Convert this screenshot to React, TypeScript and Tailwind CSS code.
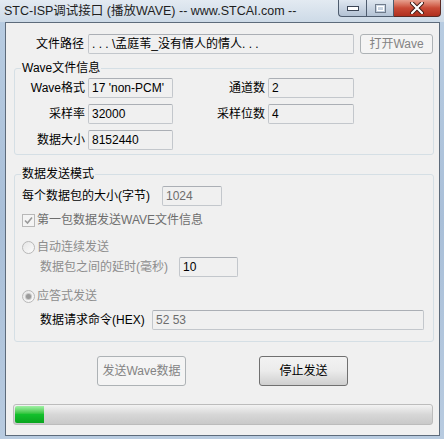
import React from "react";

function Edit({
  value,
  className = "",
  muted = false,
}: {
  value: string;
  className?: string;
  muted?: boolean;
}) {
  return (
    <div
      className={`h-[20px] flex items-center shrink-0 rounded-[2px] border border-[#c3c7cc] border-t-[#abafb5] bg-[#f0f0f0] px-[3px] whitespace-nowrap overflow-hidden ${
        muted ? "text-[#6d6d6d]" : "text-black"
      } ${className}`}
    >
      {value}
    </div>
  );
}

function CheckBox() {
  return (
    <div className="w-[13px] h-[13px] shrink-0 border border-[#b8b8b8] bg-[#f4f4f4] flex items-center justify-center">
      <svg width="9" height="9" viewBox="0 0 9 9">
        <path d="M1 4.5 L3.5 7 L8 1.5" fill="none" stroke="#9a9a9a" strokeWidth="1.6" />
      </svg>
    </div>
  );
}

function Radio({ checked = false }: { checked?: boolean }) {
  return (
    <div className="w-[13px] h-[13px] shrink-0 rounded-full border border-[#b8b8b8] bg-gradient-to-br from-[#e6e6e6] to-[#fbfbfb] flex items-center justify-center">
      {checked && <div className="w-[5px] h-[5px] rounded-full bg-[#9a9a9a] ring-1 ring-[#c8c8c8]" />}
    </div>
  );
}

export default function App() {
  return (
    <div className="w-[444px] h-[439px] flex flex-col overflow-hidden bg-gradient-to-b from-[#b9cde2] via-[#a9bfd8] to-[#b8cbe0] font-['Liberation_Sans','Noto_Sans_CJK_SC',sans-serif] text-[12px] leading-[14px] text-black">
      {/* title bar */}
      <div className="h-[22px] shrink-0 flex items-start bg-gradient-to-b from-[#e3eaf2] via-[#d8e2ec] to-[#cddae7]">
        <div className="pl-[4px] pt-[3px] text-[12.5px] leading-[16px] text-[#1e1e1e] whitespace-nowrap">
          STC-ISP调试接口 (播放WAVE) -- www.STCAI.com --
        </div>
        <div className="ml-auto mr-[3px] flex h-[17px]">
          <div className="w-[28px] flex items-center justify-center rounded-bl-[4px] border border-r-0 border-t-0 border-[#4e5c6e] bg-gradient-to-b from-[#dfe7f0] to-[#b3c2d4]">
            <svg width="12" height="6" viewBox="0 0 12 6">
              <rect x="0.5" y="1.5" width="11" height="4" fill="#fff" stroke="#3c4656" />
            </svg>
          </div>
          <div className="w-[28px] flex items-center justify-center border border-t-0 border-[#4e5c6e] bg-gradient-to-b from-[#dfe7f0] to-[#b3c2d4]">
            <svg width="11" height="9" viewBox="0 0 11 9">
              <rect x="0.5" y="0.5" width="10" height="8" fill="none" stroke="#6f7b8b" />
              <rect x="2.5" y="2.5" width="6" height="4" fill="none" stroke="#fff" />
            </svg>
          </div>
          <div className="w-[47px] flex items-center justify-center rounded-br-[4px] border border-l-0 border-t-0 border-[#5a2a24] bg-gradient-to-b from-[#e7a08f] via-[#c94a36] to-[#b0301f]">
            <svg width="16" height="12" viewBox="0 0 16 12">
              <path d="M3 1 L13 11 M13 1 L3 11" stroke="#3b1a14" strokeWidth="4" strokeLinecap="round" />
              <path d="M3 1 L13 11 M13 1 L3 11" stroke="#fff" strokeWidth="2.2" strokeLinecap="round" />
            </svg>
          </div>
        </div>
      </div>

      {/* window body */}
      <div className="flex-1 flex pl-[5px] pr-[4px] pb-[3px]">
        <div className="flex-1 flex flex-col border border-[#5d6b7b] bg-[#f0f0f0]">
          {/* file path */}
          <div className="mt-[11px] flex items-center pl-[30px]">
            <div className="w-[48px] shrink-0 whitespace-nowrap">文件路径</div>
            <Edit value=". . . \孟庭苇_没有情人的情人. . ." className="ml-[4px] w-[266px]" />
            <div className="ml-[6px] w-[73px] h-[20px] shrink-0 flex items-center justify-center rounded-[3px] border border-[#adb2b5] bg-[#f4f4f4] text-[#838383]">
              打开Wave
            </div>
          </div>

          {/* wave info group */}
          <fieldset className="mt-[7px] ml-[8px] mr-[5px] rounded-[3px] border border-[#d5dfe5] px-0 pt-[3px] pb-[4px]">
            <legend className="ml-[6px] px-[1px] leading-[14px]">Wave文件信息</legend>
            <div className="flex flex-col gap-[6px]">
              <div className="flex items-center">
                <div className="w-[70px] text-right whitespace-nowrap">Wave格式</div>
                <Edit value="17 'non-PCM'" className="ml-[3px] w-[85px]" />
                <div className="w-[92px] text-right whitespace-nowrap">通道数</div>
                <Edit value="2" className="ml-[3px] w-[86px]" />
              </div>
              <div className="flex items-center">
                <div className="w-[70px] text-right whitespace-nowrap">采样率</div>
                <Edit value="32000" className="ml-[3px] w-[85px]" />
                <div className="w-[92px] text-right whitespace-nowrap">采样位数</div>
                <Edit value="4" className="ml-[3px] w-[86px]" />
              </div>
              <div className="flex items-center">
                <div className="w-[70px] text-right whitespace-nowrap">数据大小</div>
                <Edit value="8152440" className="ml-[3px] w-[85px]" />
              </div>
            </div>
          </fieldset>

          {/* send mode group */}
          <fieldset className="mt-[12px] ml-[8px] mr-[5px] rounded-[3px] border border-[#d5dfe5] px-0 pt-0 pb-[11px]">
            <legend className="ml-[6px] px-[1px] leading-[14px]">数据发送模式</legend>
            <div className="mt-[5px] flex items-center pl-[7px]">
              <div className="w-[140px] whitespace-nowrap">每个数据包的大小(字节)</div>
              <Edit value="1024" muted className="w-[60px]" />
            </div>
            <div className="mt-[7px] flex items-center gap-[2px] pl-[7px] text-[#6d6d6d]">
              <CheckBox />
              <span className="whitespace-nowrap">第一包数据发送WAVE文件信息</span>
            </div>
            <div className="mt-[13px] flex items-center gap-[2px] pl-[7px] text-[#8d8d8d]">
              <Radio />
              <span className="whitespace-nowrap">自动连续发送</span>
            </div>
            <div className="mt-[3px] flex items-center pl-[25px]">
              <div className="w-[139px] whitespace-nowrap text-[#8d8d8d]">数据包之间的延时(毫秒)</div>
              <Edit value="10" className="w-[59px]" />
            </div>
            <div className="mt-[12px] flex items-center gap-[2px] pl-[7px] text-[#8d8d8d]">
              <Radio checked />
              <span className="whitespace-nowrap">应答式发送</span>
            </div>
            <div className="mt-[7px] flex items-center pl-[25px]">
              <div className="w-[112px] whitespace-nowrap">数据请求命令(HEX)</div>
              <Edit value="52 53" muted className="w-[272px]" />
            </div>
          </fieldset>

          {/* buttons */}
          <div className="mt-[14px] flex pl-[91px]">
            <div className="w-[89px] h-[30px] flex items-center justify-center rounded-[3px] border border-[#adb2b5] bg-[#f4f4f4] text-[#838383]">
              发送Wave数据
            </div>
            <div className="ml-[73px] w-[89px] h-[30px] flex items-center justify-center rounded-[3px] border border-[#707070] bg-gradient-to-b from-[#f2f2f2] via-[#ebebeb] to-[#cfcfcf]">
              停止发送
            </div>
          </div>

          {/* progress */}
          <div className="mt-[18px] ml-[7px] w-[420px] h-[21px] flex rounded-[3px] border border-[#bcbcbc] bg-gradient-to-b from-[#f3f3f3] via-[#d7d7d7] to-[#c9c9c9] p-px overflow-hidden">
            <div className="w-[29px] h-full rounded-l-[2px] bg-gradient-to-b from-[#9ff0a5] via-[#13c02c] to-[#0aa51f]" />
          </div>
        </div>
      </div>
    </div>
  );
}
